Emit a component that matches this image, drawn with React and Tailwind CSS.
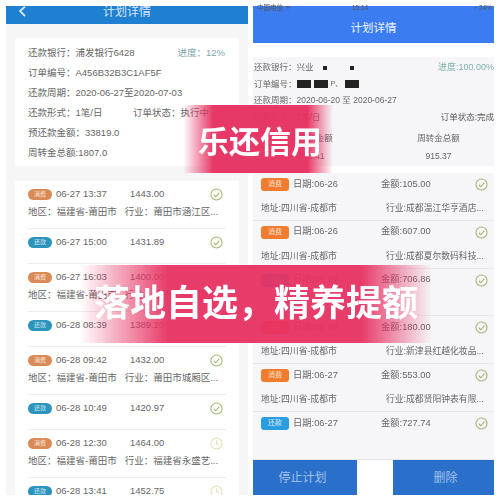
const font = { fontFamily: '"Liberation Sans","Noto Sans CJK SC",sans-serif' };

function Check({ pending }) {
  const c = pending ? "#e3dfb4" : "#a3b56f";
  return (
    <svg width="13" height="13" viewBox="0 0 14 14" fill="none" stroke={c} strokeWidth="1.1" className="shrink-0">
      <circle cx="7" cy="7" r="6" />
      {pending ? <path d="M7 3.5V7l2.2 2" /> : <path d="M4 7.2l2.2 2.2L10 5" />}
    </svg>
  );
}

function Pill({ kind }) {
  const pay = kind === "pay";
  return (
    <span className={`w-[24px] h-[11px] rounded-full flex items-center justify-center text-[6px] text-white/80 shrink-0 ${pay ? "bg-[#2a94bd]" : "bg-[#d98a55]"}`}>
      {pay ? "还款" : "消费"}
    </span>
  );
}

function LeftRow({ kind, time, amt, region, trade, pending, last }) {
  return (
    <div className={`${kind === "pay" ? "h-[35px]" : "h-[48px]"} ${last ? "" : "border-b border-[#eeeeee]"} pt-[6px]`}>
      <div className="flex items-center h-[14px] text-[9.5px] text-[#666] pr-[3px]">
        <Pill kind={kind} />
        <span className="ml-[4px] w-[74px]">{time}</span>
        <span className="flex-1">{amt}</span>
        <Check pending={pending} />
      </div>
      {region && <div className="mt-[4px] text-[9.5px] text-[#666] whitespace-nowrap">地区：福建省-莆田市<span className="inline-block w-[8px]" />行业：{trade}</div>}
    </div>
  );
}

function RightRow({ kind, date, amt, trade }) {
  const pay = kind === "pay";
  return (
    <div className="h-[47.8px] border-b border-[#e8e8ec] pl-[8px] pr-[6px] pt-[4px]">
      <div className="flex items-center h-[15px] text-[9.3px] text-[#666]">
        <span className={`w-[28px] h-[13px] rounded-[3px] flex items-center justify-center text-[7px] text-white/80 ${pay ? "bg-[#2c9ce0]" : "bg-[#f07d2e]"}`}>{pay ? "还款" : "消费"}</span>
        <span className="ml-[4px] w-[88px]">日期:{date}</span>
        <span className="flex-1">金额:{amt}</span>
        <Check />
      </div>
      {trade && (
        <div className="flex justify-between mt-[10px] text-[8.8px] text-[#666] whitespace-nowrap">
          <span>地址:四川省-成都市</span>
          <span className="w-[102px] overflow-hidden">行业:{trade}</span>
        </div>
      )}
    </div>
  );
}

function Censor({ w, h = 8 }) {
  return <span className="inline-block bg-[#222] mr-[3px] align-middle" style={{ width: w, height: h }} />;
}

export default function App() {
  return (
    <div style={font} className="relative w-[500px] h-[500px] overflow-hidden bg-white">
      <div className="flex gap-[5px] pl-[6px] pt-[6px] h-[495px] blur-[0.4px]">
        {/* Left phone */}
        <div className="w-[242px] bg-[#f6f6f6] flex flex-col overflow-hidden">
          <div className="h-[18px] bg-[#1f7fd0] flex items-center text-white relative shrink-0 overflow-hidden">
            <div className="flex-1 text-center text-[12px] leading-[14px] text-white/80 -mt-[6px]">计划详情</div>
            <svg width="9" height="12" viewBox="0 0 9 12" fill="none" stroke="#d5e6f5" strokeWidth="1.8" className="absolute left-[12px] top-0">
              <path d="M7 0.5L2 5l5 5" />
            </svg>
          </div>
          <div className="mx-[9px] mt-[14px] h-[128px] bg-white rounded-[2px] pl-[13px] pr-[13px] pt-[5px] text-[9.5px] text-[#666] shrink-0">
            <div className="h-[20px] flex items-center justify-between pr-[1px]">
              <span>还款银行：浦发银行6428</span><span className="text-[#7ea7ad]">进度：12%</span>
            </div>
            <div className="h-[20px] flex items-center">订单编号：A456B32B3C1AF5F</div>
            <div className="h-[20px] flex items-center">还款周期：2020-06-27至2020-07-03</div>
            <div className="h-[20.5px] flex items-center">
              <span className="w-[105px]">还款形式：1笔/日</span><span>订单状态：执行中</span>
            </div>
            <div className="h-[20px] flex items-center">预还款金额：33819.0</div>
            <div className="h-[20px] flex items-center">周转金总额:1807.0</div>
          </div>
          <div className="mx-[9px] mt-[15px] flex-1 bg-white px-[13px] overflow-hidden">
            <LeftRow kind="buy" time="06-27 13:37" amt="1443.00" region trade="莆田市涵江区..." />
            <LeftRow kind="pay" time="06-27 15:00" amt="1431.89" />
            <LeftRow kind="buy" time="06-27 16:03" amt="1400.00" region trade="莆田市荔城区..." />
            <LeftRow kind="pay" time="06-28 08:39" amt="1389.20" />
            <LeftRow kind="buy" time="06-28 09:42" amt="1432.00" region trade="莆田市城厢区..." />
            <LeftRow kind="pay" time="06-28 10:49" amt="1420.97" />
            <LeftRow kind="buy" time="06-28 12:30" amt="1464.00" region trade="福建省永盛艺..." pending />
            <LeftRow kind="pay" time="06-28 13:41" amt="1452.75" pending last />
          </div>
        </div>

        {/* Right phone */}
        <div className="w-[241px] flex flex-col relative">
          <div className="h-[37px] bg-[#3b7df0] flex items-center justify-center text-white/90 text-[11.5px] shrink-0 pt-[9px]">计划详情</div>
          <div className="absolute top-[-2px] left-0 right-0 flex justify-between text-[6.5px] leading-[8px] text-[#555] pl-[4px] pr-[2px]">
            <span>中国电信 ᯤ</span><span className="mr-[44px]">15:14</span><span>◔ 24%</span>
          </div>
          <div className="mt-[14px] h-[109px] bg-[#f6f6f9] pl-[1px] text-[8.5px] text-[#666] shrink-0 whitespace-nowrap overflow-hidden">
            <div className="h-[17px] mt-[2px] flex items-center justify-between">
              <span>还款银行：兴业<span className="inline-block w-[9px]" /><Censor w={4} h={4} /><span className="inline-block w-[20px]" /><Censor w={4} h={4} /></span>
              <span className="text-[#7fb3ac] text-[9px]">进度:100.00%</span>
            </div>
            <div className="h-[16px] flex items-center">订单编号：<Censor w={14} /><Censor w={14} /><span className="text-[7px] mr-[3px]">P、</span><Censor w={14} /></div>
            <div className="h-[17px] flex items-center">还款周期：2020-06-20 至 2020-06-27</div>
            <div className="h-[17px] flex items-center justify-between">
              <span>还款形式：1笔/日</span><span className="text-[#555]">订单状态:完成</span>
            </div>
            <div className="flex mt-[6px]">
              <div className="w-[116px] text-center">预还款金额</div>
              <div className="w-[126px] pl-[14px] text-center">周转金总额</div>
            </div>
            <div className="flex mt-[5px]">
              <div className="w-[116px] text-center">893.41</div>
              <div className="w-[126px] pl-[14px] text-center">915.37</div>
            </div>
          </div>
          <div className="flex-1 mt-[7px] bg-[#f6f6f9] overflow-hidden">
            <RightRow kind="buy" date="06-26" amt="105.00" trade="成都温江华亨酒店..." />
            <RightRow kind="buy" date="06-26" amt="607.00" trade="成都夏尔数码科技..." />
            <RightRow kind="pay" date="06-26" amt="706.86" />
            <RightRow kind="buy" date="06-26" amt="180.00" trade="新津县红越化妆品..." />
            <RightRow kind="buy" date="06-27" amt="553.00" trade="成都贤阳钟表有限..." />
            <RightRow kind="pay" date="06-27" amt="727.74" />
          </div>
          <div className="h-[35px] flex justify-between shrink-0 bg-white">
            <div className="w-[104px] bg-[#2a6fc9] flex items-center justify-center pr-[5px] text-[12px] text-[#a0c2ec]">停止计划</div>
            <div className="w-[101px] bg-[#2a6fc9] flex items-center justify-center pl-[4px] text-[12px] text-[#a0c2ec]">删除</div>
          </div>
        </div>
      </div>

      {/* Overlaid promo banners */}
      <div className="absolute left-[183px] top-[105px] w-[150px] h-[68px] flex items-center justify-center pt-[8px] pl-[4px] text-white text-[31px] font-bold whitespace-nowrap blur-[0.3px]"
        style={{ backgroundImage: "linear-gradient(90deg,rgba(230,50,98,0) 0%,rgba(230,50,98,.97) 20%,rgba(230,50,98,.97) 83%,rgba(230,50,98,0) 100%)" }}>
        乐还信用
      </div>
      <div className="absolute left-[80px] top-[265px] w-[352px] h-[78px] flex items-center justify-center text-white text-[36px] font-bold whitespace-nowrap blur-[0.3px]"
        style={{ backgroundImage: "linear-gradient(90deg,rgba(230,50,98,0) 0%,rgba(230,50,98,.95) 25%,rgba(230,50,98,.95) 80%,rgba(230,50,98,0) 100%)" }}>
        落地自选，精养提额
      </div>
    </div>
  );
}
